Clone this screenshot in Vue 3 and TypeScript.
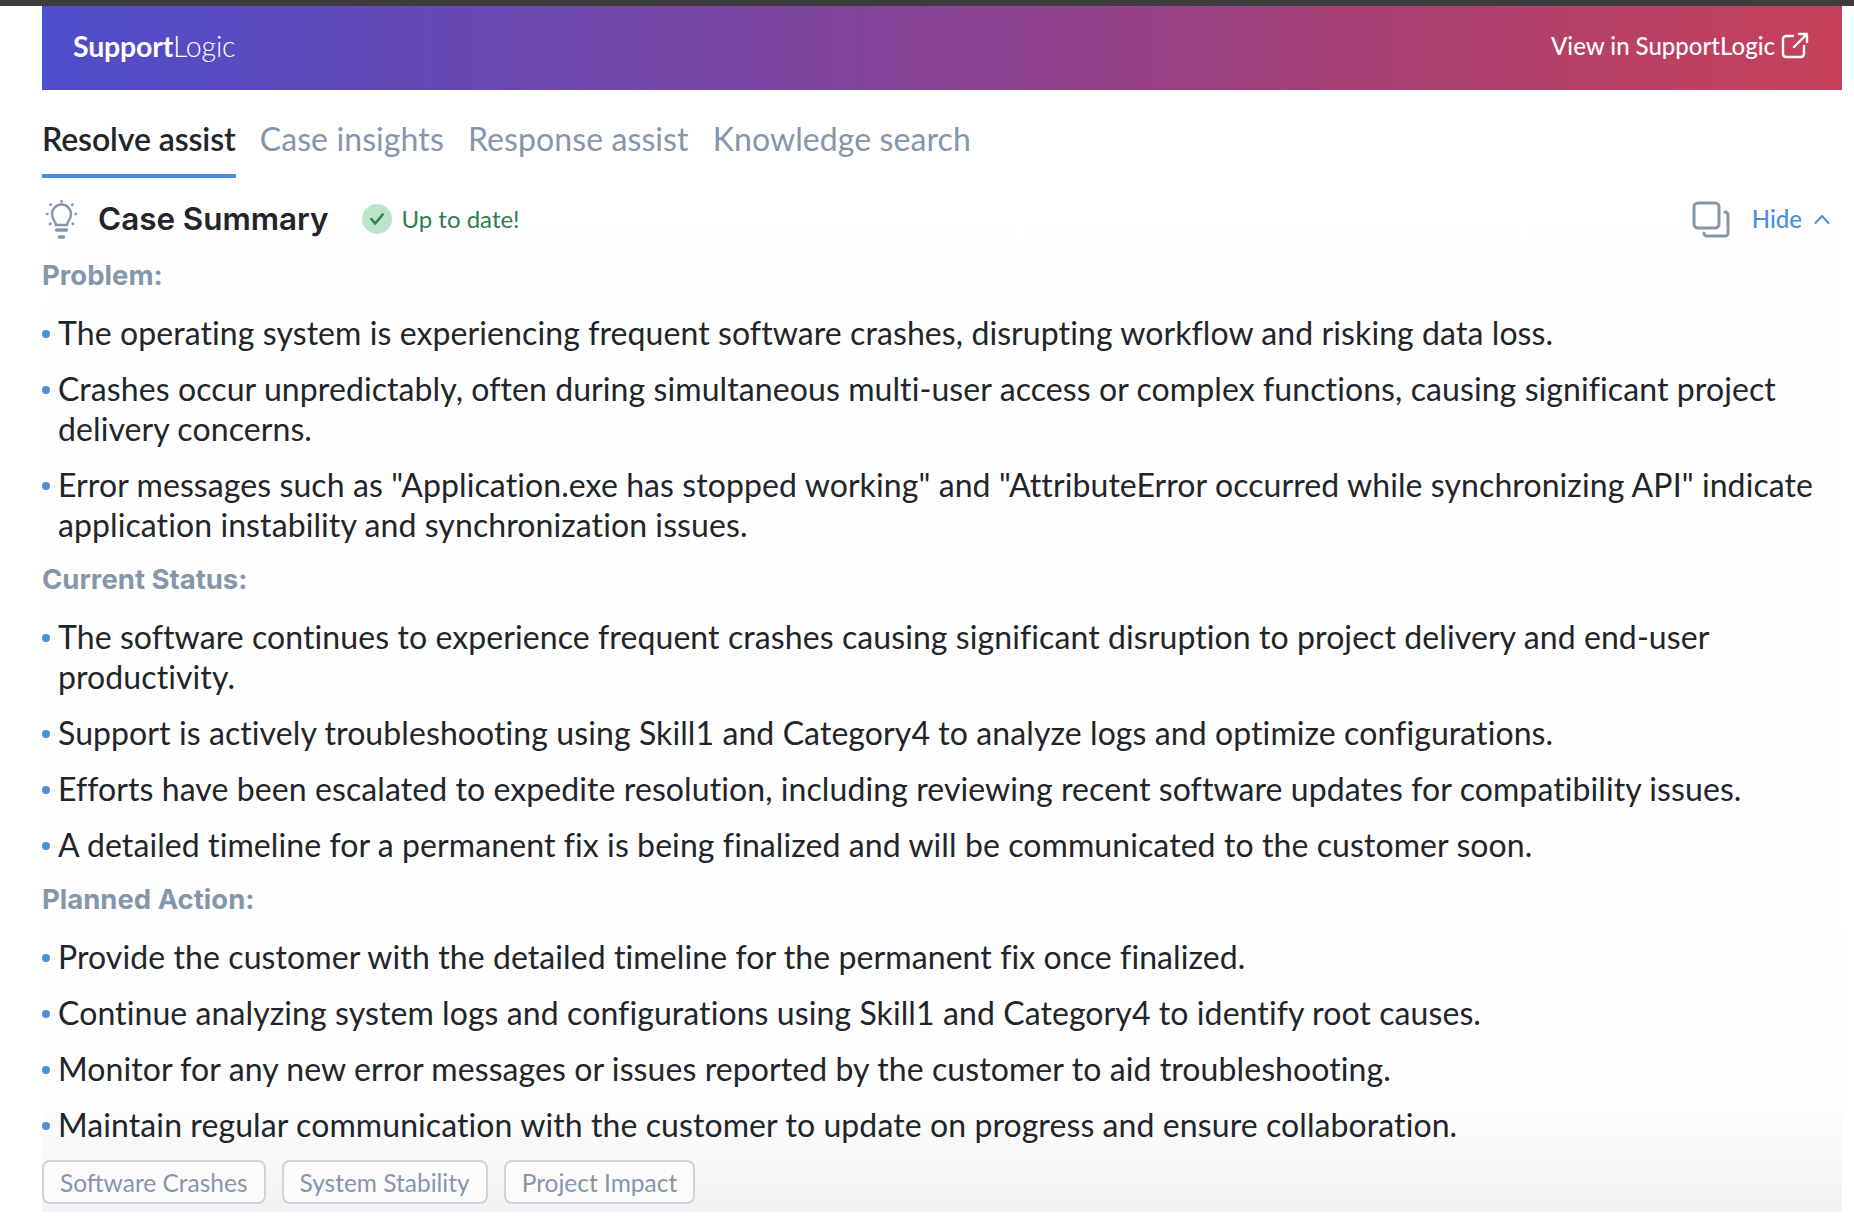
<script setup lang="ts">
interface Section { title: string; items: string[][] }
const tabs: string[] = ['Resolve assist', 'Case insights', 'Response assist', 'Knowledge search']
const sections: Section[] = [
  { title: 'Problem:', items: [
    ['The operating system is experiencing frequent software crashes, disrupting workflow and risking data loss.'],
    ['Crashes occur unpredictably, often during simultaneous multi-user access or complex functions, causing significant project', 'delivery concerns.'],
    ['Error messages such as "Application.exe has stopped working" and "AttributeError occurred while synchronizing API" indicate', 'application instability and synchronization issues.'],
  ]},
  { title: 'Current Status:', items: [
    ['The software continues to experience frequent crashes causing significant disruption to project delivery and end-user', 'productivity.'],
    ['Support is actively troubleshooting using Skill1 and Category4 to analyze logs and optimize configurations.'],
    ['Efforts have been escalated to expedite resolution, including reviewing recent software updates for compatibility issues.'],
    ['A detailed timeline for a permanent fix is being finalized and will be communicated to the customer soon.'],
  ]},
  { title: 'Planned Action:', items: [
    ['Provide the customer with the detailed timeline for the permanent fix once finalized.'],
    ['Continue analyzing system logs and configurations using Skill1 and Category4 to identify root causes.'],
    ['Monitor for any new error messages or issues reported by the customer to aid troubleshooting.'],
    ['Maintain regular communication with the customer to update on progress and ensure collaboration.'],
  ]},
]
const chips: string[] = ['Software Crashes', 'System Stability', 'Project Impact']
</script>

<template>
  <div class="page">
    <div class="topbar"></div>
    <main class="panel">
      <header class="banner">
        <div class="logo"><b>Support</b>Logic</div>
        <a class="view">View in SupportLogic
          <svg width="28" height="28" viewBox="0 0 28 28" fill="none" stroke="#fff" stroke-width="2.4" stroke-linecap="round" stroke-linejoin="round">
            <path d="M12 4H5a3 3 0 0 0-3 3v15a3 3 0 0 0 3 3h15a3 3 0 0 0 3-3v-8" />
            <path d="M18 2h8v8M26 2 13 15" />
          </svg>
        </a>
      </header>
      <nav class="tabs">
        <span v-for="(t, i) in tabs" :key="t" class="tab" :class="{ active: i === 0 }">{{ t }}</span>
      </nav>
      <div class="summary-head">
        <svg class="bulb" width="33" height="40" viewBox="0 0 33 40" fill="none" stroke="#8496ab" stroke-width="2.400" stroke-linecap="round">
          <path d="M11 25c0-3-4-5-4-11a9.500 9.500 0 0 1 19 0c0 6-4 8-4 11z" />
          <path d="M11.500 30h10" stroke-width="3.400" />
          <path d="M14.500 37h4" stroke-width="3.400" />
          <path d="M16.500 1v.4M2 14h.4M30.600 14h.4M5.500 4.500l.3.300M27.500 4.500l-.3.300M5 24l.3-.3M28 24l-.3-.3" stroke-width="2.600" />
        </svg>
        <h2>Case Summary</h2>
        <span class="badge">
          <svg width="16" height="14" viewBox="0 0 14 12" fill="none" stroke="#2f7d4f" stroke-width="2.200" stroke-linecap="round" stroke-linejoin="round"><path d="M2 6l3.500 4L12 2" /></svg>
        </span>
        <span class="uptodate">Up to date!</span>
        <span class="spacer"></span>
        <svg class="copy" width="38" height="38" viewBox="0 0 38 38" fill="none" stroke="#8496ab" stroke-width="3" stroke-linejoin="round" stroke-linecap="round">
          <rect x="2" y="2" width="25" height="25" rx="4" />
          <path d="M33 11a3 3 0 0 1 3 3v18a3 3 0 0 1-3 3H15a3 3 0 0 1-3-3" />
        </svg>
        <span class="hide">Hide</span>
        <svg class="chev" width="16" height="10" viewBox="0 0 16 10" fill="none" stroke="#4a90d9" stroke-width="2" stroke-linecap="round" stroke-linejoin="round"><path d="M1.500 9L8 2l6.500 7" /></svg>
      </div>
      <section v-for="s in sections" :key="s.title" class="section">
        <h3>{{ s.title }}</h3>
        <ul>
          <li v-for="it in s.items" :key="it[0]">
            <span v-for="line in it" :key="line" class="line">{{ line }}</span>
          </li>
        </ul>
      </section>
      <div class="chips">
        <span v-for="c in chips" :key="c" class="chip">{{ c }}</span>
      </div>
    </main>
  </div>
</template>

<style>
html, body { margin: 0; background: #fff; }
</style>

<style scoped>
.page { width: 1854px; height: 1218px; overflow: hidden; background: #fff; font-family: "Lato", "Open Sans", sans-serif; color: #212529; }
.topbar { height: 6px; background: #3d3d3d; }
.panel { width: 1800px; height: 1206px; margin-left: 42px; background: linear-gradient(to bottom, #fff 0, #fefefe 1095px, #f2f2f2 1206px); }
.banner { height: 84px; display: flex; align-items: center; justify-content: space-between; padding: 0 33px 5px 31px; box-sizing: border-box; background: linear-gradient(90deg, #4d4dcb 0%, #7a45a2 40%, #a53f76 72%, #c64159 100%); color: #fff; }
.logo { font-size: 28.500px; font-weight: 300; letter-spacing: -0.2px; }
.logo b { font-weight: 700; }
.view { display: flex; align-items: center; gap: 6px; font-size: 24px; font-weight: 500; }
.tabs { display: flex; gap: 24px; height: 88px; box-sizing: border-box; padding-top: 28px; }
.tab { height: 60px; box-sizing: border-box; padding-top: 1px; font-size: 32px; letter-spacing: 0.1px; font-weight: 400; color: #8496ab; }
.tab.active { color: #212529; font-weight: 600; letter-spacing: -0.1px; border-bottom: 4px solid #4a90d9; }
.summary-head { display: flex; align-items: center; height: 78px; padding: 6px 12px 0 3px; box-sizing: border-box; }
.bulb { margin-right: 20px; }
.summary-head h2 { margin: 0 0 2px; font-family: "Inter", sans-serif; font-size: 31.400px; font-weight: 600; }
.badge { width: 30px; height: 30px; border-radius: 50%; background: #bde3c9; margin: 0 0 2px 34px; display: flex; align-items: center; justify-content: center; }
.uptodate { margin: 0 0 4px 9px; font-size: 24px; color: #2f7d4f; }
.spacer { flex: 1; }
.hide { margin: 0 0 4px 22px; font-size: 24px; font-weight: 500; color: #4a90d9; }
.chev { margin: 0 0 2px 12px; }
.section h3 { margin: 0; height: 40px; line-height: 38px; font-family: "Inter", sans-serif; font-size: 27.500px; font-weight: 700; color: #8496ab; }
.section ul { list-style: none; margin: 0; padding: 17px 0 15px; display: flex; flex-direction: column; gap: 16px; }
.section li { position: relative; padding-left: 16px; font-size: 32px; letter-spacing: 0.09px; line-height: 40px; }
.section li::before { content: ""; position: absolute; left: 0; top: 17px; width: 8px; height: 8px; border-radius: 50%; background: #4a90d9; }
.line { display: block; white-space: nowrap; }
.chips { display: flex; gap: 16px; }
.chip { height: 44px; box-sizing: border-box; border: 2px solid #ced2db; border-radius: 8px; padding: 0 16px; display: flex; align-items: center; font-size: 24.500px; color: #8496ab; background: #fbfbfc; }
</style>
